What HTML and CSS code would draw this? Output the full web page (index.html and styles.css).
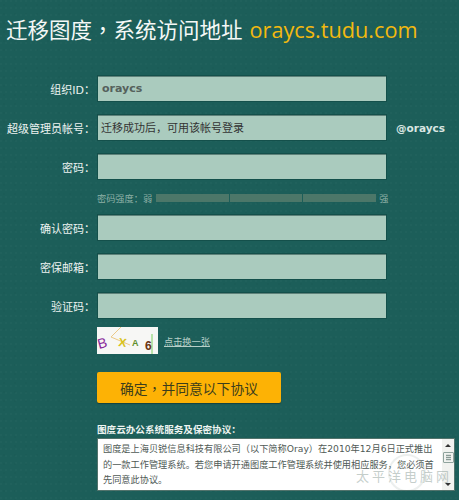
FILE: index.html
```html
<!DOCTYPE html>
<html lang="zh-CN">
<head>
<meta charset="utf-8">
<title>迁移图度</title>
<link rel="stylesheet" href="styles.css">
</head>
<body>
<h1 class="title">迁移图度<span class="comma" lang="zh-TW">，</span>系统访问地址 <span class="domain">oraycs.tudu.com</span></h1>
<form class="form">
  <div class="row">
    <label class="label">组织ID：</label>
    <div class="field field-org">oraycs</div>
  </div>
  <div class="row">
    <label class="label">超级管理员帐号：</label>
    <div class="field">迁移成功后，可用该帐号登录</div>
    <span class="suffix">@oraycs</span>
  </div>
  <div class="row">
    <label class="label">密码：</label>
    <div class="field"></div>
  </div>
  <div class="strength">
    <span>密码强度：弱</span>
    <div class="bars"><i></i><i></i><i></i></div>
    <span>强</span>
  </div>
  <div class="row">
    <label class="label">确认密码：</label>
    <div class="field"></div>
  </div>
  <div class="row">
    <label class="label">密保邮箱：</label>
    <div class="field"></div>
  </div>
  <div class="row">
    <label class="label">验证码：</label>
    <div class="field"></div>
  </div>
  <div class="captcha-row">
    <svg class="captcha" viewBox="0 0 61 27" width="61" height="27">
      <rect width="61" height="27" fill="#f7f7f5"/>
      <path d="M24 0 L14 10 L33 18" stroke="#ecc987" fill="none"/>
      <path d="M55 7 V27" stroke="#a5dc90" stroke-width="1.500"/>
      <text x="0" y="0" class="cap-b" transform="translate(2 22) rotate(-15)">B</text>
      <text x="0" y="0" class="cap-x" transform="translate(21 19) rotate(8)">X</text>
      <text x="35" y="19" class="cap-a">A</text>
      <text x="48" y="23" class="cap-6">6</text>
    </svg>
    <a class="refresh" href="#">点击换一张</a>
  </div>
  <button class="submit" type="button">确定<span class="comma" lang="zh-TW">，</span>并同意以下协议</button>
  <div class="agreement-title">图度云办公系统服务及保密协议：</div>
  <div class="agreement">
    <div class="agreement-text">图度是上海贝锐信息科技有限公司（以下简称Oray）在2010年12月6日正式推出的一款工作管理系统。若您申请开通图度工作管理系统并使用相应服务，您必须首先同意此协议。</div>
    <div class="scrollbar">
      <span class="arrow-up"></span>
      <span class="thumb"></span>
      <span class="arrow-down"></span>
    </div>
    <span class="stamp"></span>
    <span class="watermark">太平洋电脑网</span>
  </div>
</form>
</body>
</html>
```
FILE: styles.css
```css
html, body {
  margin: 0;
  padding: 0;
}
body {
  width: 459px;
  height: 500px;
  overflow: hidden;
  background-color: #1c5e59;
  background-image:
    radial-gradient(circle at 1px 1px, rgba(255,255,255,.02) 1px, transparent 1.5px),
    radial-gradient(circle at 4px 5px, rgba(0,0,0,.025) 1px, transparent 1.5px);
  background-size: 5px 7px, 11px 9px;
  font-family: "Liberation Sans", "Noto Sans CJK SC", sans-serif;
  color: #fff;
}
.title {
  margin: 0;
  padding: 14px 0 0 6px;
  height: 46px;
  font-size: 21.500px;
  line-height: 29px;
  font-weight: 400;
  white-space: nowrap;
  color: #f4f8f6;
}
.comma {
  font-family: "Noto Sans CJK TC", sans-serif;
}
.domain {
  margin-left: 1px;
  font-family: "Open Sans", sans-serif;
  font-size: 21.700px;
  color: #f2b90f;
}
.form {
  display: flow-root;
  padding-top: 15px;
}
.row {
  display: flex;
  align-items: center;
  height: 27px;
  margin-bottom: 12px;
}
.label {
  width: 95px;
  margin-right: 2px;
  text-align: right;
  font-family: "DejaVu Sans", "Noto Sans CJK SC", sans-serif;
  font-size: 11px;
  color: #edf3f1;
  white-space: nowrap;
}
.field {
  box-sizing: border-box;
  width: 290px;
  height: 27px;
  padding: 0 3px;
  background: #aacbbe;
  border: 1px solid #7d9c93;
  border-top: 2px solid #5e827a;
  border-bottom: 1px solid #d7ebe0;
  border-left-color: #5e827a;
  border-right-color: #83a59a;
  outline: 1px solid #14504b;
  outline-offset: -1px;
  font-size: 11px;
  line-height: 24px;
  color: #333;
  white-space: nowrap;
}
.field-org {
  padding-left: 4px;
  font-family: "DejaVu Sans", sans-serif;
  font-weight: 700;
  font-size: 11px;
  color: #55615c;
}
.suffix {
  margin-left: 9px;
  font-family: "DejaVu Sans", sans-serif;
  font-weight: 700;
  font-size: 10.500px;
  color: #d9e6e2;
}
.strength {
  display: flex;
  align-items: center;
  width: 292px;
  height: 10px;
  margin: 13px 0 11px 97px;
  font-size: 9.200px;
  color: #8db0a6;
  white-space: nowrap;
}
.bars {
  display: flex;
  gap: 1px;
  width: 220px;
  height: 8px;
  margin: 0 3px 0 4px;
}
.bars i {
  flex: 1;
  background: #4c7769;
}
.captcha-row {
  display: flex;
  align-items: center;
  height: 27px;
  margin: -4px 0 0 97px;
}
.captcha {
  display: block;
}
.cap-b, .cap-x, .cap-a, .cap-6 {
  font-family: "Liberation Sans", sans-serif;
}
.cap-b { font-size: 14px; fill: #8a2a9a; }
.cap-x { font-size: 12px; font-weight: 700; fill: #d8c21a; }
.cap-a { font-size: 9px; font-weight: 700; fill: #5f8f2c; }
.cap-6 { font-size: 12px; font-weight: 700; fill: #6b3410; }
.refresh {
  margin-left: 6px;
  font-size: 9.200px;
  color: #b7cfc8;
  text-decoration: underline;
}
.submit {
  display: block;
  width: 184px;
  height: 31px;
  margin: 18px 0 0 97px;
  padding: 0;
  border: 0;
  border-radius: 2px;
  background: #fdb205;
  font-family: inherit;
  font-size: 13.800px;
  color: #3b3d1c;
  box-shadow: 0 1px 1px rgba(0,0,0,.3);
}
.agreement-title {
  margin: 20px 0 0 97px;
  height: 15px;
  font-size: 9.600px;
  line-height: 13px;
  font-weight: 700;
  color: #eef4f1;
}
.agreement {
  position: relative;
  display: flex;
  box-sizing: border-box;
  width: 358px;
  height: 53px;
  margin-left: 97px;
  background: #fff;
  border: 1px solid #52736c;
  overflow: hidden;
}
.agreement-text {
  flex: 1;
  padding: 2px 5px 0 5px;
  font-family: "DejaVu Sans", "Noto Sans CJK SC", sans-serif;
  font-size: 9.200px;
  line-height: 15.500px;
  color: #4f5a56;
}
.scrollbar {
  display: flex;
  flex-direction: column;
  align-items: center;
  width: 12px;
  padding-top: 5px;
  background: #f1f2ef;
}
.arrow-up, .arrow-down {
  width: 0;
  height: 0;
  border-left: 3px solid transparent;
  border-right: 3px solid transparent;
}
.arrow-up { border-bottom: 3px solid #333; }
.arrow-down { border-top: 3px solid #333; margin-top: auto; margin-bottom: 4px; }
.thumb {
  box-sizing: border-box;
  width: 11px;
  height: 11px;
  margin-top: 5px;
  border: 1px solid #8fa39d;
  border-radius: 1px;
  background: repeating-linear-gradient(#d8e0dc 0 1px, #8b9a95 1px 2px) center / 5px 7px no-repeat;
}
.stamp {
  position: absolute;
  left: 290px;
  top: 15px;
  width: 34px;
  height: 34px;
  border: 2px solid rgba(170,180,176,.22);
  border-radius: 50%;
}
.watermark {
  position: absolute;
  right: 2px;
  bottom: 5px;
  font-size: 13px;
  line-height: 16px;
  letter-spacing: 3px;
  color: rgba(140,158,152,.5);
}
```
